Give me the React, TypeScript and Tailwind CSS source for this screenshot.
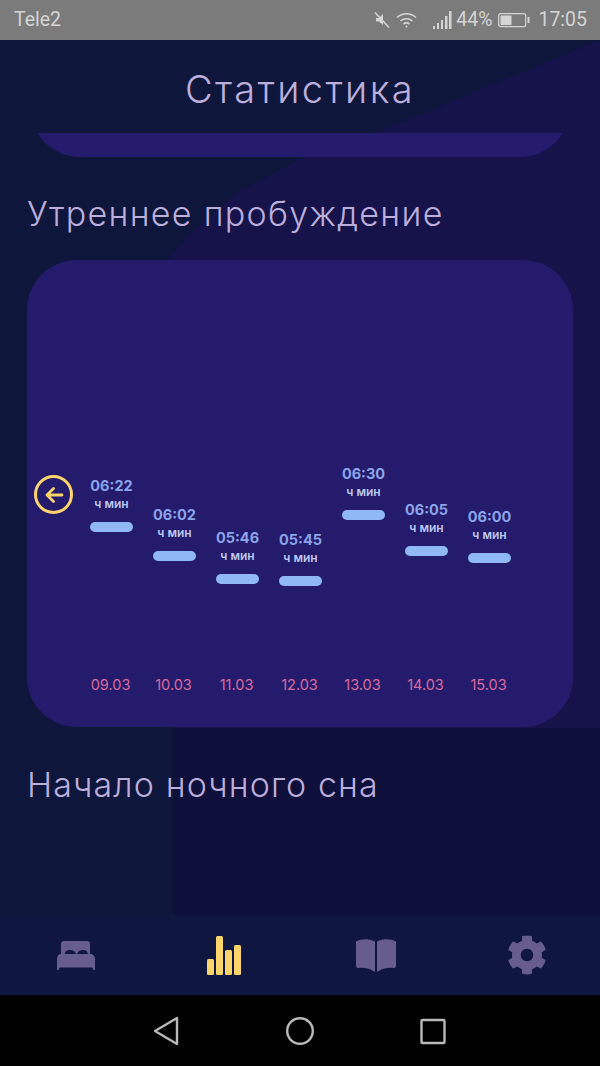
import { FaCog } from 'react-icons/fa';

const points = [
  { time: '06:22', date: '09.03', y: 476 },
  { time: '06:02', date: '10.03', y: 505 },
  { time: '05:46', date: '11.03', y: 528 },
  { time: '05:45', date: '12.03', y: 530 },
  { time: '06:30', date: '13.03', y: 464 },
  { time: '06:05', date: '14.03', y: 500 },
  { time: '06:00', date: '15.03', y: 507 },
];

const CARD_TOP = 260;

function StatusBar() {
  return (
    <div className="flex h-10 items-center justify-between bg-[#7b7b7b] pl-[14px] pr-[13px] font-['Roboto',sans-serif] text-[19.5px] text-[#d4d4d4]">
      <span>Tele2</span>
      <div className="flex items-center">
        <svg width="18" height="18" viewBox="0 0 18 18" fill="none" stroke="#d4d4d4" strokeWidth="1.6" className="mr-[4px]">
          <path d="M2 1.5 16 16.5" />
          <path d="M3 7h3l4-4v11l-4-3.5H3z" fill="#d4d4d4" stroke="none" />
        </svg>
        <svg width="23" height="18" viewBox="0 0 22 18" fill="none" stroke="#d4d4d4" strokeWidth="1.6" className="mr-[15px]">
          <path d="M1.5 6.5c5.5-5 13.5-5 19 0M5 10c3.5-3 8.5-3 12 0M8 13c1.8-1.3 4.2-1.3 6 0" />
          <circle cx="11" cy="15.5" r="1" fill="#d4d4d4" stroke="none" />
        </svg>
        <svg width="20" height="20" viewBox="0 0 20 20" fill="#d4d4d4" className="mr-[3px]">
          <rect x="0" y="16" width="2" height="3" />
          <rect x="4" y="13" width="2" height="6" />
          <rect x="8" y="10" width="2" height="9" />
          <rect x="12" y="6" width="2.5" height="13" />
          <rect x="16" y="1" width="2.5" height="18" />
        </svg>
        <span>44%</span>
        <svg width="32" height="18" viewBox="0 0 32 18" fill="none" className="ml-[6px] mr-[8px]">
          <rect x="0.7" y="2.7" width="27" height="13" rx="2" stroke="#d4d4d4" strokeWidth="1.2" />
          <rect x="2.5" y="4.5" width="11" height="9.5" fill="#d4d4d4" />
          <rect x="29.5" y="6" width="2" height="6" fill="#d4d4d4" />
        </svg>
        <span>17:05</span>
      </div>
    </div>
  );
}

function Chart() {
  return (
    <div className="relative mx-[27px] mt-[24px] h-[467px] rounded-[50px] bg-[#251b6c]">
      <button className="absolute left-[7px] top-[215px] flex h-[39px] w-[39px] items-center justify-center rounded-full border-[3px] border-[#fcd46c]">
        <svg width="24" height="24" viewBox="0 0 24 24" fill="none" stroke="#fcd46c" strokeWidth="2.8" strokeLinecap="round" strokeLinejoin="round">
          <path d="M20 12H5M11.5 5.5 5 12l6.5 6.5" />
        </svg>
      </button>
      <div className="ml-[53px] flex h-full w-[441px]">
        {points.map((p) => (
          <div key={p.date} className="flex w-[63px] flex-col items-center">
            <div style={{ height: p.y - CARD_TOP }} className="shrink-0" />
            <div className="h-5 text-[14.5px] font-bold leading-5 text-[#8ba4ea]">{p.time}</div>
            <div className="h-4 text-[12px] font-semibold leading-4 text-[#bcc6f0]">ч мин</div>
            <div className="mt-[10px] h-[10px] w-[43px] rounded-full bg-[#8fb8f5]" />
            <div className="absolute top-[415px] -translate-x-px text-[14.5px] leading-5 text-[#d86a9e]">{p.date}</div>
          </div>
        ))}
      </div>
    </div>
  );
}

function BedIcon() {
  return (
    <svg width="38" height="31" viewBox="0 0 38 31" fill="#665d8c">
      <path d="M4 14V4a3 3 0 0 1 3-3h23a3 3 0 0 1 3 3v10z" />
      <path d="M8 14c0-3 2-4 5-4s5 1 6 4zM20 14c1-3 3-4 6-4s4 1 5 4z" fill="#0f1740" />
      <path d="M4 14h29c3 0 5 2 5 5v11h-1.5l-1-2.5H2.500l-1 2.5H0V19c0-3 1.500-5 4-5z" />
    </svg>
  );
}

function ChartIcon() {
  return (
    <svg width="36" height="42" viewBox="0 0 36 42" fill="#fcd46c">
      <rect x="1" y="25" width="7" height="16" rx="1.5" />
      <rect x="10" y="2" width="7" height="39" rx="1.5" />
      <rect x="19" y="16" width="7" height="25" rx="1.5" />
      <rect x="28" y="11" width="7" height="30" rx="1.5" />
    </svg>
  );
}

function BookIcon() {
  return (
    <svg width="40" height="35" viewBox="0 0 40 35" fill="#665d8c">
      <path d="M0 3.500C6 .5 13 .5 19 3.500V34C14 30 7 29 2 30c-1.200 0-2-.8-2-2z" />
      <path d="M40 3.500C34 .5 27 .5 21 3.500V34c5-4 12-5 17-4 1.200 0 2-.8 2-2z" />
    </svg>
  );
}

function BottomNav() {
  return (
    <div className="flex h-20 items-center bg-[#0f1740]">
      <div className="flex w-[151px] justify-center">
        <BedIcon />
      </div>
      <div className="flex w-[146px] justify-center">
        <ChartIcon />
      </div>
      <div className="flex w-[157px] justify-center">
        <BookIcon />
      </div>
      <div className="flex w-[146px] justify-center">
        <FaCog size={40} className="text-[#665d8c]" />
      </div>
    </div>
  );
}

export default function App() {
  return (
    <div className="flex h-[1066px] w-[600px] flex-col overflow-hidden bg-[#0f1740]">
      <StatusBar />
      <div className="relative flex-1 overflow-hidden bg-[#0f163c] font-['Inter',sans-serif]">
        <svg className="absolute inset-0" width="600" height="875" viewBox="0 0 600 875">
          <polygon points="600,0 383,90 298,120 237,153 191,193 165,222 173,688 600,688" fill="#15134a" />
          <polygon points="173,688 600,688 600,875 173,875" fill="#0e0f3a" />
        </svg>
        <div className="relative">
          <h1 className="pt-[27px] text-center text-[38px] font-light leading-[44px] tracking-[2.4px] text-[#bcaedb]">Статистика</h1>
          <div className="mx-[30px] mt-[22px] h-6 overflow-hidden">
            <div className="-mt-10 h-16 rounded-b-[50px] bg-[#251b6c]" />
          </div>
          <h2 className="ml-[27px] mt-[35px] text-[34px] font-light leading-[44px] tracking-[1.3px] text-[#bcaedb]">Утреннее пробуждение</h2>
          <Chart />
          <h2 className="ml-[27px] mt-[36px] text-[34px] font-light leading-[44px] tracking-[1.1px] text-[#bcaedb]">Начало ночного сна</h2>
        </div>
      </div>
      <BottomNav />
      <div className="flex h-[71px] items-center bg-black">
        <svg width="600" height="71" viewBox="0 0 600 71" fill="none" stroke="#b9b9b9" strokeWidth="2.4" strokeLinejoin="round">
          <path d="M177 23 155 36l22 13z" />
          <circle cx="300" cy="36" r="12.8" />
          <rect x="421.5" y="25" width="23" height="23" rx="1" />
        </svg>
      </div>
    </div>
  );
}
